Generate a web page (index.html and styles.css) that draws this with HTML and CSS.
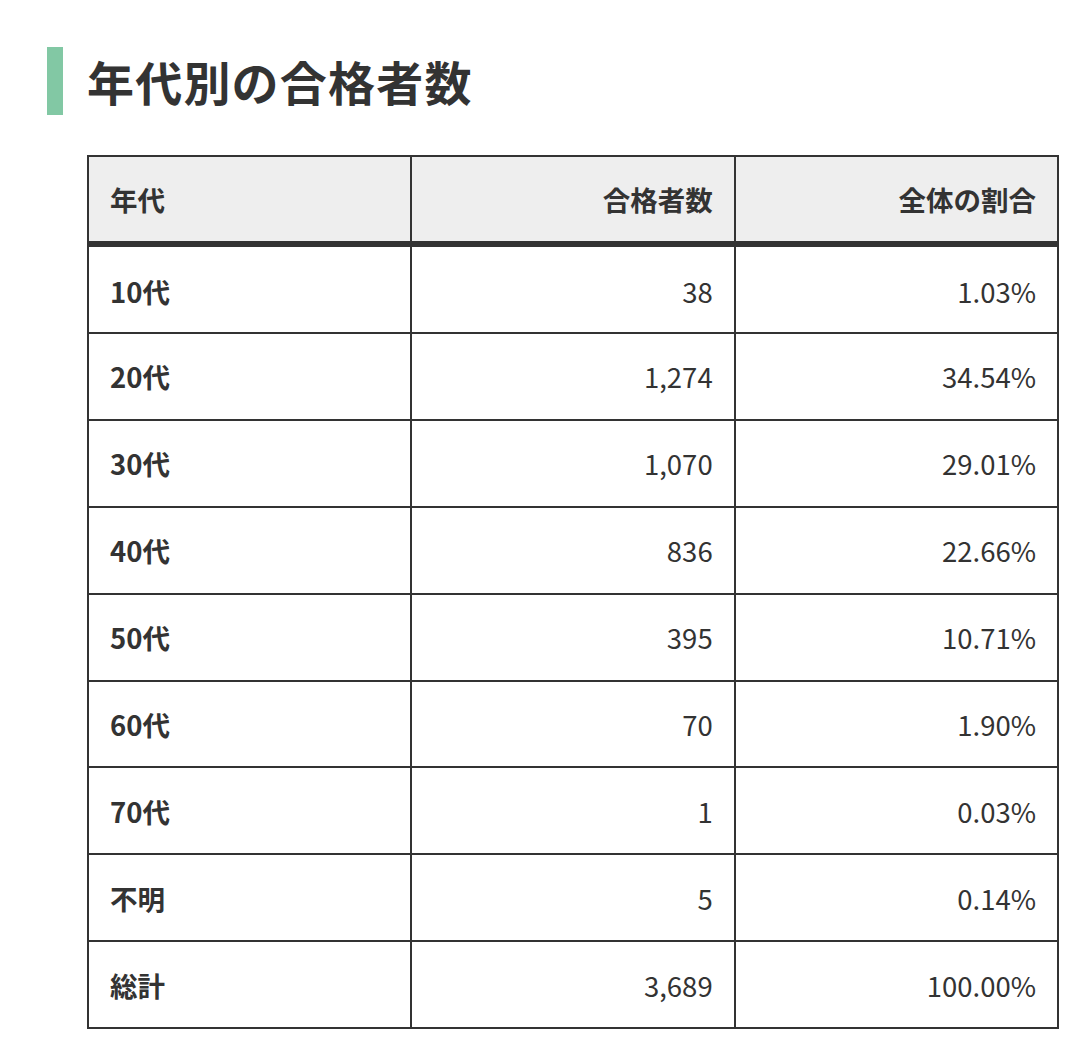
FILE: index.html
```html
<!DOCTYPE html>
<html lang="ja">
<head>
<meta charset="utf-8">
<link rel="stylesheet" href="styles.css">
</head>
<body>
<div class="page">
  <h2 class="heading">年代別の合格者数</h2>
  <table class="data">
    <thead>
      <tr><th class="c1">年代</th><th class="num">合格者数</th><th class="num">全体の割合</th></tr>
    </thead>
    <tbody>
      <tr><th>10代</th><td>38</td><td>1.03%</td></tr>
      <tr><th>20代</th><td>1,274</td><td>34.54%</td></tr>
      <tr><th>30代</th><td>1,070</td><td>29.01%</td></tr>
      <tr><th>40代</th><td>836</td><td>22.66%</td></tr>
      <tr><th>50代</th><td>395</td><td>10.71%</td></tr>
      <tr><th>60代</th><td>70</td><td>1.90%</td></tr>
      <tr><th>70代</th><td>1</td><td>0.03%</td></tr>
      <tr><th>不明</th><td>5</td><td>0.14%</td></tr>
      <tr><th>総計</th><td>3,689</td><td>100.00%</td></tr>
    </tbody>
  </table>
</div>
</body>
</html>
```
FILE: styles.css
```css
html, body {
  margin: 0;
  padding: 0;
  background: #fff;
}
body {
  font-family: "Noto Sans CJK JP", "Noto Sans", sans-serif;
  color: #333;
}
.page {
  padding: 47px 0 0 47px;
}
.heading {
  margin: 0;
  height: 68px;
  border-left: 16px solid #82c8a4;
  padding-left: 24px;
  font-size: 47px;
  font-weight: 700;
  line-height: 68px;
  letter-spacing: 1.2px;
  color: #333;
}
.data {
  margin: 40px 0 0 40px;
  width: 972px;
  border-collapse: collapse;
  table-layout: fixed;
  font-size: 27.5px;
}
.data th, .data td {
  border: 2px solid #333;
  height: 86.875px;
  padding: 0 21px;
  text-align: right;
  vertical-align: middle;
  box-sizing: border-box;
}
.data thead th {
  background: #eeeeee;
  font-weight: 700;
  height: 88px;
  border-bottom: 6px solid #333;
}
.data tbody tr:first-child th,
.data tbody tr:first-child td {
  height: 89px;
  padding-top: 2px;
}
.data th.c1, .data tbody th {
  text-align: left;
  font-weight: 700;
}
.data td {
  font-weight: 400;
}
```
